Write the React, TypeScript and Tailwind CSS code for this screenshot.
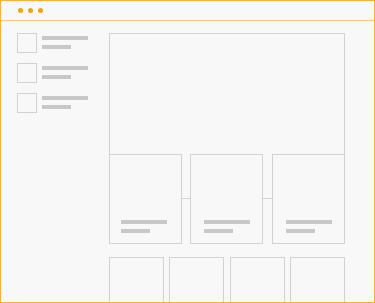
import React from "react";

const SideItem = () => (
  <div className="flex items-start gap-[5px]">
    <div className="w-[20px] h-[20px] border border-[#d2d2d2] shrink-0" />
    <div className="flex flex-col gap-[5px] pt-[3px]">
      <div className="w-[46px] h-[4px] bg-[#c8c8c8]" />
      <div className="w-[29px] h-[4px] bg-[#c8c8c8]" />
    </div>
  </div>
);

const Card = ({ first }: { first?: boolean }) => (
  <div
    className={
      first
        ? "w-[73px] h-[90px] border border-[#d2d2d2] flex flex-col justify-end pl-[11px] pb-[10px] gap-[5px] shrink-0"
        : "w-[73px] h-[90px] border border-[#d2d2d2] flex flex-col justify-end pl-[13px] pb-[10px] gap-[5px] shrink-0"
    }
  >
    <div className="w-[46px] h-[4px] bg-[#c8c8c8]" />
    <div className="w-[29px] h-[4px] bg-[#c8c8c8]" />
  </div>
);

export default function App() {
  return (
    <div className="w-[375px] h-[303px] border border-[#f8b133] bg-[#f8f8f8] overflow-hidden flex flex-col">
      <div className="h-[20px] shrink-0 border-b border-[#fcca72] flex items-center pl-[17px] gap-[5px]">
        <div className="w-[5px] h-[5px] rounded-full bg-[#f7a30d]" />
        <div className="w-[5px] h-[5px] rounded-full bg-[#f7a30d]" />
        <div className="w-[5px] h-[5px] rounded-full bg-[#f7a30d]" />
      </div>
      <div className="flex pl-[16px] pt-[12px]">
        <div className="w-[92px] shrink-0 flex flex-col gap-[10px]">
          <SideItem />
          <SideItem />
          <SideItem />
        </div>
        <div className="w-[236px] shrink-0 flex flex-col">
          <div className="h-[121px] border-t border-x border-[#d2d2d2]" />
          <div className="flex">
            <Card first />
            <div className="w-[8px] shrink-0">
              <div className="w-full h-px mt-[44px] bg-[#d2d2d2]" />
            </div>
            <Card />
            <div className="w-[9px] shrink-0">
              <div className="w-full h-px mt-[44px] bg-[#d2d2d2]" />
            </div>
            <Card />
          </div>
          <div className="flex mt-[13px]">
            <div className="w-[55px] h-[60px] border border-[#d2d2d2] shrink-0" />
            <div className="w-[55px] h-[60px] border border-[#d2d2d2] shrink-0 ml-[5px]" />
            <div className="w-[55px] h-[60px] border border-[#d2d2d2] shrink-0 ml-[6px]" />
            <div className="w-[55px] h-[60px] border border-[#d2d2d2] shrink-0 ml-[5px]" />
          </div>
        </div>
      </div>
    </div>
  );
}
